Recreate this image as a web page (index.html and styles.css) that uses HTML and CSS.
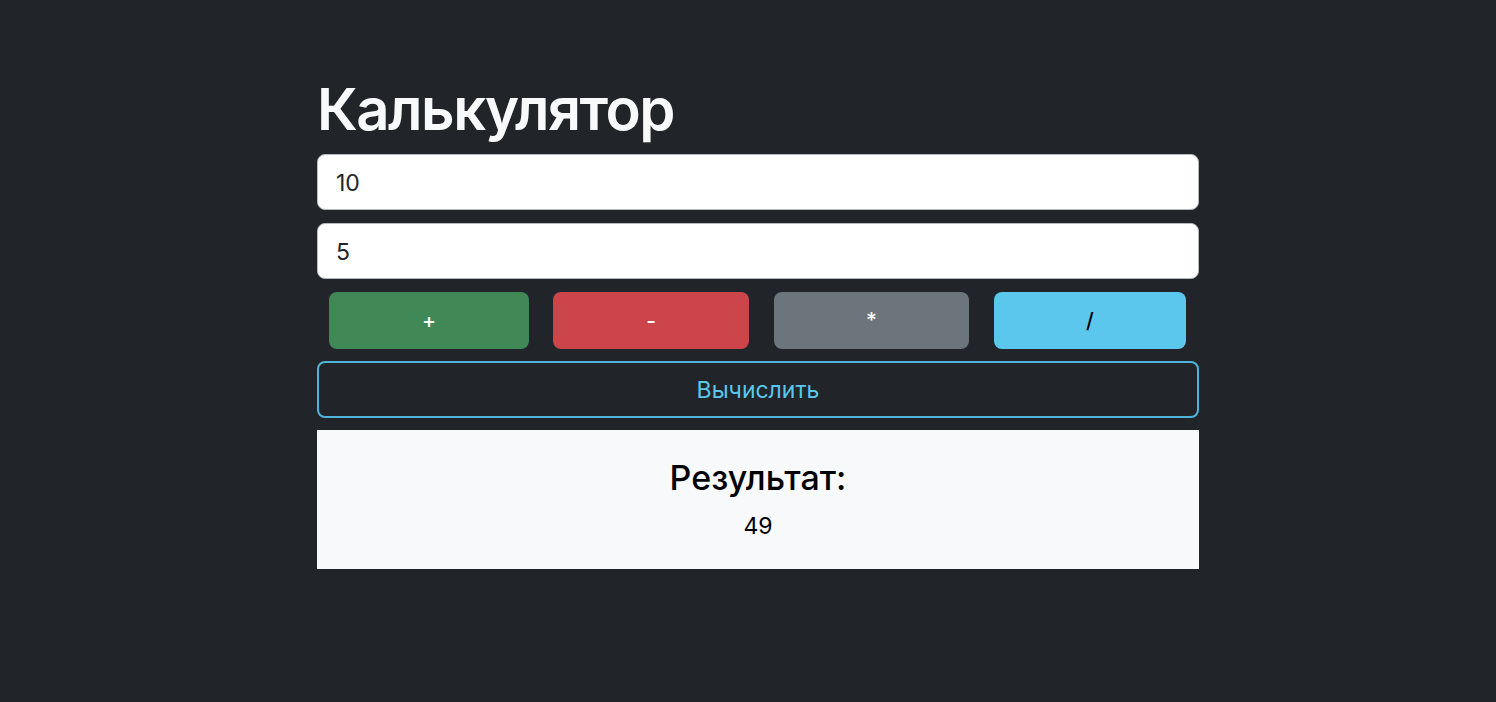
FILE: index.html
```html
<!DOCTYPE html>
<html lang="ru">
<head>
<meta charset="utf-8">
<title>Калькулятор</title>
<link rel="stylesheet" href="styles.css">
</head>
<body>
<main class="container">
  <h1 class="title">Калькулятор</h1>
  <input class="field" type="text" value="10">
  <input class="field" type="text" value="5">
  <div class="ops">
    <button class="op op-green">+</button>
    <button class="op op-red">-</button>
    <button class="op op-grey">*</button>
    <button class="op op-cyan">/</button>
  </div>
  <button class="calc">Вычислить</button>
  <section class="result">
    <h2 class="result-title">Результат:</h2>
    <p class="result-value">49</p>
  </section>
</main>
</body>
</html>
```
FILE: styles.css
```css
* { box-sizing: border-box; }
html, body { margin: 0; padding: 0; }
body {
  background: #212529;
  font-family: Inter, "Noto Sans", sans-serif;
  color: #f8f9fa;
}
.container {
  width: 882px;
  margin-left: 317px;
  padding-top: 73px;
  display: flex;
  flex-direction: column;
  gap: 13px;
}
.title {
  margin: 0 0 -4px 0;
  font-size: 58px;
  font-weight: 600;
  letter-spacing: -1.5px;
  line-height: 72px;
  color: #f8f9fa;
}
.field {
  height: 56px;
  width: 100%;
  border: 1px solid #b6b9bd;
  border-radius: 8px;
  background: #fff;
  padding: 2px 18px 0 18px;
  font-family: Inter, "Noto Sans", sans-serif;
  font-size: 23px;
  color: #212529;
  outline: none;
}
.ops {
  display: grid;
  grid-template-columns: 200px 196px 196px 193px;
  column-gap: 24px;
  margin: 0 12px;
}
.op-grey { margin-left: 1px; }
.op-cyan { margin-left: 1px; }
.op {
  height: 57px;
  border: none;
  border-radius: 8px;
  font-family: Inter, "Noto Sans", sans-serif;
  font-size: 21px;
  font-weight: 500;
  color: #fff;
}
.op-green { background: #418857; }
.op-red { background: #cc454b; }
.op-grey { background: #6c747c; }
.op-cyan { background: #5bc7ec; color: #000; }
.calc {
  margin-top: -1px;
  height: 57px;
  width: 100%;
  background: transparent;
  border: 2px solid #4fb4da;
  border-radius: 8px;
  color: #5bc7ec;
  font-family: Inter, "Noto Sans", sans-serif;
  font-size: 23px;
}
.result {
  margin-top: -1px;
  background: #f8f9fa;
  height: 139px;
  padding-top: 28px;
  text-align: center;
  color: #000;
}
.result-title {
  margin: 0;
  font-size: 34px;
  font-weight: 500;
  line-height: 40px;
}
.result-value {
  margin: 14px 0 0 0;
  font-size: 23px;
  line-height: 28px;
}
```
